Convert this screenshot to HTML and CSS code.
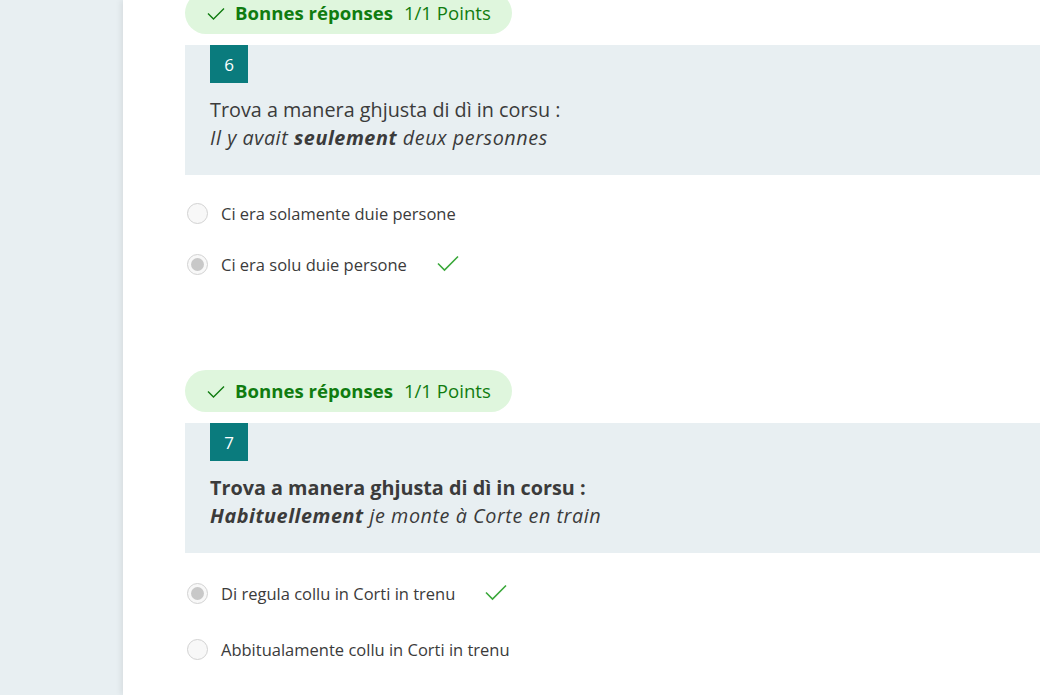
FILE: index.html
```html
<!DOCTYPE html>
<html lang="fr">
<head>
<meta charset="utf-8">
<title>Quiz</title>
<link rel="stylesheet" href="styles.css">
</head>
<body>
<div class="page">
  <aside class="sidebar"></aside>
  <main class="card">
    <section class="question q6">
      <div class="pill">
        <svg class="pill-check" width="20" height="20" viewBox="0 0 20 20"><path d="M2 10.5 L7.5 16 L18 5.5" fill="none" stroke="#107c10" stroke-width="1.4"/></svg>
        <span class="pill-strong">Bonnes réponses</span>
        <span class="pill-points">1/1 Points</span>
      </div>
      <div class="qbox">
        <div class="qnum">6</div>
        <div class="qtext">
          <p>Trova a manera ghjusta di dì in corsu :</p>
          <p class="it">Il y avait <b>seulement</b> deux personnes</p>
        </div>
      </div>
      <ul class="options">
        <li class="option"><span class="radio"></span><span class="label">Ci era solamente duie persone</span></li>
        <li class="option"><span class="radio checked"></span><span class="label">Ci era solu duie persone</span>
          <svg class="ok" width="22" height="18" viewBox="0 0 22 18"><path d="M1 8.5 L7.5 15 L21 1.5" fill="none" stroke="#3aa83a" stroke-width="1.6"/></svg></li>
      </ul>
    </section>
    <section class="question q7">
      <div class="pill">
        <svg class="pill-check" width="20" height="20" viewBox="0 0 20 20"><path d="M2 10.5 L7.5 16 L18 5.5" fill="none" stroke="#107c10" stroke-width="1.4"/></svg>
        <span class="pill-strong">Bonnes réponses</span>
        <span class="pill-points">1/1 Points</span>
      </div>
      <div class="qbox">
        <div class="qnum">7</div>
        <div class="qtext">
          <p class="bold">Trova a manera ghjusta di dì in corsu :</p>
          <p class="it"><b>Habituellement</b> je monte à Corte en train</p>
        </div>
      </div>
      <ul class="options">
        <li class="option"><span class="radio checked"></span><span class="label">Di regula collu in Corti in trenu</span>
          <svg class="ok" width="22" height="18" viewBox="0 0 22 18"><path d="M1 8.5 L7.5 15 L21 1.5" fill="none" stroke="#3aa83a" stroke-width="1.6"/></svg></li>
        <li class="option"><span class="radio"></span><span class="label">Abbitualamente collu in Corti in trenu</span></li>
      </ul>
    </section>
  </main>
</div>
</body>
</html>
```
FILE: styles.css
```css
* { box-sizing: border-box; }
html, body {
  margin: 0;
  padding: 0;
  height: 695px;
  overflow: hidden;
}
body {
  font-family: "Segoe UI", "Open Sans", "Noto Sans", sans-serif;
  color: #333;
  background: #e8eff2;
}
.page {
  display: flex;
  height: 695px;
}
.sidebar {
  width: 123px;
  flex: none;
  background: #e8eff2;
}
.card {
  flex: 1;
  background: #fff;
  padding-left: 62px;
  box-shadow: -2px 0 6px rgba(0, 0, 0, 0.08);
  position: relative;
}
.question.q6 { margin-top: -8px; }
.question.q7 { margin-top: 86px; }
.pill {
  display: flex;
  align-items: center;
  width: 327px;
  height: 42px;
  border-radius: 21px;
  background: #dff6dd;
  padding-left: 21px;
  padding-bottom: 2px;
  font-size: 18.6px;
  color: #107c10;
}
.pill-check { margin-right: 9px; margin-top: 1px; }
.pill-strong { font-weight: 700; margin-right: 11px; }
.pill-points { font-weight: 400; }
.qbox {
  margin-top: 11px;
  height: 130px;
  background: #e8eff2;
  padding-left: 25px;
}
.qnum {
  width: 38px;
  height: 38px;
  background: #0a7b7d;
  color: #fff;
  font-size: 17px;
  display: flex;
  align-items: center;
  justify-content: center;
}
.qtext {
  margin-top: 13px;
  font-size: 19.8px;
  line-height: 28px;
  color: #3b3b3b;
}
.qtext p { margin: 0; }
.qtext .bold { font-weight: 700; }
.qtext .it { font-style: italic; letter-spacing: 0.55px; }
.options {
  list-style: none;
  margin: 0;
  padding: 0;
}
.option {
  display: flex;
  align-items: center;
  height: 40px;
  padding-left: 2px;
  font-size: 16.5px;
  color: #3b3b3b;
}
.q6 .options { margin-top: 18px; }
.q6 .option + .option { margin-top: 11px; }
.q7 .options { margin-top: 20px; }
.q7 .option + .option { margin-top: 16px; }
.radio {
  width: 21px;
  height: 21px;
  border-radius: 50%;
  border: 1px solid #d2d2d2;
  background: #f8f8f8;
  display: flex;
  align-items: center;
  justify-content: center;
  margin-right: 13px;
  flex: none;
}
.radio.checked::after {
  content: "";
  width: 13px;
  height: 13px;
  border-radius: 50%;
  background: #c8c8c8;
}
.ok { margin-left: 30px; }
```
